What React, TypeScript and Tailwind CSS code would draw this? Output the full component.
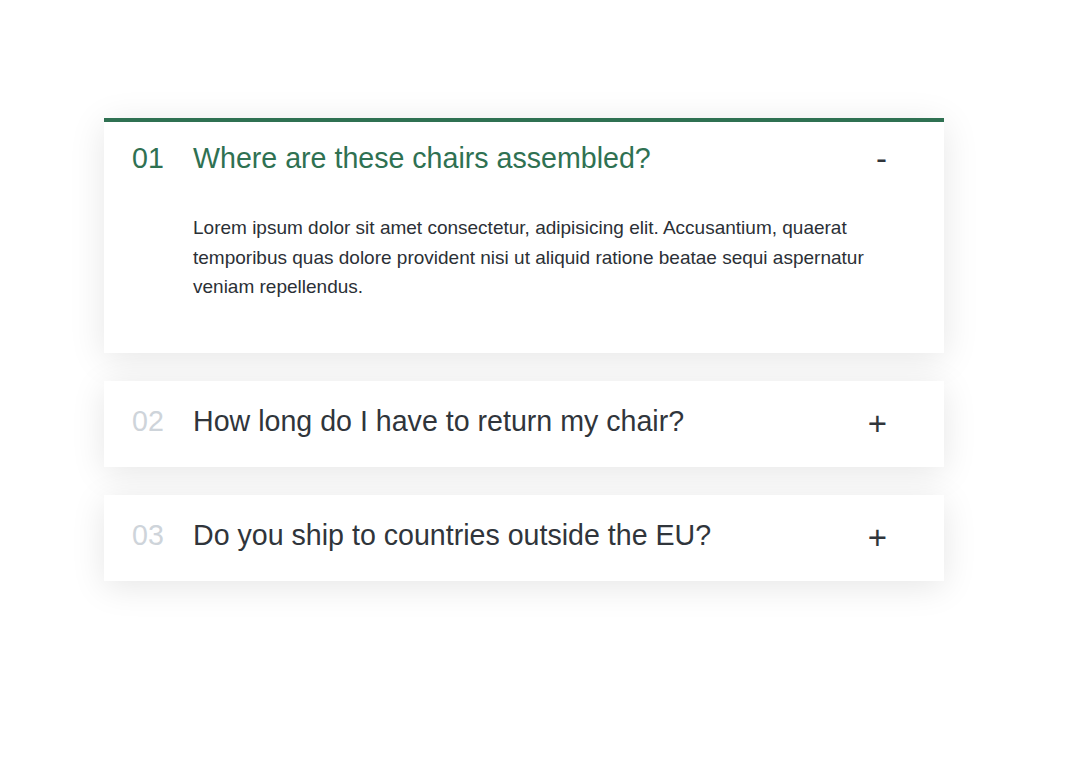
import { useState } from 'react'

const faqs = [
  {
    title: 'Where are these chairs assembled?',
    text: 'Lorem ipsum dolor sit amet consectetur, adipisicing elit. Accusantium, quaerat temporibus quas dolore provident nisi ut aliquid ratione beatae sequi aspernatur veniam repellendus.',
  },
  {
    title: 'How long do I have to return my chair?',
    text: 'Lorem ipsum dolor sit amet consectetur, adipisicing elit. Accusantium, quaerat temporibus quas dolore provident nisi ut aliquid ratione beatae sequi aspernatur veniam repellendus.',
  },
  {
    title: 'Do you ship to countries outside the EU?',
    text: 'Lorem ipsum dolor sit amet consectetur, adipisicing elit. Accusantium, quaerat temporibus quas dolore provident nisi ut aliquid ratione beatae sequi aspernatur veniam repellendus.',
  },
]

function Item({ num, title, text, open, onToggle }: { num: number; title: string; text: string; open: boolean; onToggle: () => void }) {
  return (
    <div
      onClick={onToggle}
      className={`cursor-pointer bg-white shadow-[0_6px_34px_rgba(0,0,0,0.1)] ${open ? 'border-t-4 border-[#2f7152] pt-[20px] pb-[51px]' : 'pt-6 pb-[27px]'}`}
    >
      <div className="flex items-start pl-[28px] pr-[57px]">
        <span className={`w-[61px] shrink-0 text-[28.6px] leading-[33px] ${open ? 'text-[#2f7152]' : 'text-[#ced4da]'}`}>
          {num < 10 ? `0${num}` : num}
        </span>
        <span className={`flex-1 text-[28.6px] leading-[33px] ${open ? 'text-[#2f7152]' : 'text-[#30353b]'}`}>{title}</span>
        {/* toggle sign */}
        <span className={`text-[33px] leading-[33px] text-[#30353b] ${open ? '' : 'pt-[2px]'}`}>{open ? '-' : '+'}</span>
      </div>
      {open && (
        <p className="mt-[38px] ml-[89px] mr-[30px] text-[19px] leading-[29.5px] text-[#2b3036]">{text}</p>
      )}
    </div>
  )
}

export default function App() {
  const [open, setOpen] = useState<number | null>(0)

  return (
    <div className="min-h-screen bg-white pt-[118px] pl-[104px] font-['Liberation_Sans',Arial,sans-serif]">
      <div className="w-[840px] flex flex-col gap-[28px]">
        {faqs.map((f, i) => (
          <Item
            key={f.title}
            num={i + 1}
            title={f.title}
            text={f.text}
            open={open === i}
            onToggle={() => setOpen(open === i ? null : i)}
          />
        ))}
      </div>
    </div>
  )
}
